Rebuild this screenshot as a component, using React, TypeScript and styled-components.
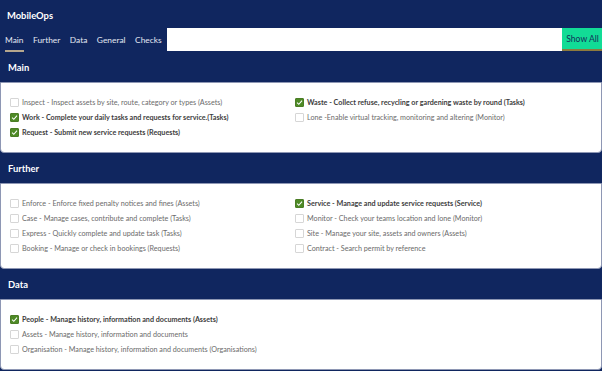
import React from 'react'
import styled, { createGlobalStyle } from 'styled-components'

const Global = createGlobalStyle`
  body {
    margin: 0;
    background: #10265f;
    font-family: Lato, "Liberation Sans", sans-serif;
  }
`

const Page = styled.div`
  width: 602px;
  height: 371px;
  overflow: hidden;
  display: flex;
  flex-direction: column;
`

const Title = styled.div`
  height: 28px;
  display: flex;
  align-items: center;
  padding: 3px 0 0 7px;
  box-sizing: border-box;
  color: #fff;
  font-weight: 700;
  font-size: 9.4px;
`

const TabBar = styled.div`
  display: flex;
  height: 24px;
  align-items: stretch;
`

const Tabs = styled.div`
  display: flex;
  gap: 9.5px;
  padding: 0 5px 0 5px;
`

const Tab = styled.div<{ $active?: boolean }>`
  display: flex;
  align-items: center;
  color: #e4e8f2;
  font-size: 8.4px;
  border-bottom: 2px solid ${(p) => (p.$active ? '#b5a68d' : 'transparent')};
  box-sizing: border-box;
  padding-top: 2px;
`

const Search = styled.input`
  flex: 1;
  border: none;
  background: #fff;
  margin: 0;
  padding: 0;
  height: 23px;
`

const ShowAll = styled.button`
  width: 40px;
  height: 23px;
  border: none;
  padding: 0 0 0 1px;
  background: #12dc96;
  color: #12305a;
  font-family: Lato, "Liberation Sans", sans-serif;
  font-size: 8.6px;
  white-space: nowrap;
  border-bottom: 2px solid #8d7a3e;
  box-sizing: border-box;
`

const Section = styled.section`
  margin-top: 1px;
  display: flex;
  flex-direction: column;
`

const SectionHead = styled.div`
  height: 29px;
  display: flex;
  align-items: center;
  padding-left: 8px;
  color: #fff;
  font-weight: 700;
  font-size: 9.4px;
`

const SectionBody = styled.div`
  background: #fff;
  border: 1px solid #8e97b4;
  border-radius: 0 0 4px 4px;
  padding: 12px 0 12px 9px;
  display: grid;
  grid-template-columns: 285px 1fr;
  align-content: start;
`

const Column = styled.div`
  display: flex;
  flex-direction: column;
`

const Row = styled.label`
  height: 15px;
  display: flex;
  align-items: center;
  gap: 3px;
  font-size: 7.2px;
  white-space: nowrap;
`

const Box = styled.span<{ $checked?: boolean }>`
  width: 9px;
  height: 9px;
  border-radius: 1px;
  box-sizing: border-box;
  border: 1px solid ${(p) => (p.$checked ? '#4b7d25' : '#d6d6d6')};
  background: ${(p) => (p.$checked ? '#4e8a26' : '#fff')};
  display: flex;
  align-items: center;
  justify-content: center;
`

const Label = styled.span<{ $checked?: boolean }>`
  color: ${(p) => (p.$checked ? '#3d3d3d' : '#6b6b6b')};
  font-weight: ${(p) => (p.$checked ? 700 : 400)};
`

type Item = [string, boolean]

const Check = ({ text, on }: { text: string; on: boolean }) => (
  <Row>
    <Box $checked={on}>
      {on && (
        <svg width="7" height="7" viewBox="0 0 10 10">
          <path d="M1.5 5.2 L4 7.6 L8.6 2.4" fill="none" stroke="#fff" strokeWidth="1.5" />
        </svg>
      )}
    </Box>
    <Label $checked={on}>{text}</Label>
  </Row>
)

const Group = ({ title, left, right }: { title: string; left: Item[]; right: Item[] }) => (
  <Section>
    <SectionHead>{title}</SectionHead>
    <SectionBody>
      <Column>
        {left.map(([t, on]) => <Check key={t} text={t} on={on} />)}
      </Column>
      <Column>
        {right.map(([t, on]) => <Check key={t} text={t} on={on} />)}
      </Column>
    </SectionBody>
  </Section>
)

export default function App() {
  return (
    <Page>
      <Global />
      <Title>MobileOps</Title>
      <TabBar>
        <Tabs>
          <Tab $active>Main</Tab>
          <Tab>Further</Tab>
          <Tab>Data</Tab>
          <Tab>General</Tab>
          <Tab>Checks</Tab>
        </Tabs>
        <Search />
        <ShowAll>Show All</ShowAll>
      </TabBar>
      <Group
        title="Main"
        left={[
          ['Inspect - Inspect assets by site, route, category or types (Assets)', false],
          ['Work - Complete your daily tasks and requests for service.(Tasks)', true],
          ['Request - Submit new service requests (Requests)', true],
        ]}
        right={[
          ['Waste - Collect refuse, recycling or gardening waste by round (Tasks)', true],
          ['Lone -Enable virtual tracking, monitoring and altering (Monitor)', false],
        ]}
      />
      <Group
        title="Further"
        left={[
          ['Enforce - Enforce fixed penalty notices and fines (Assets)', false],
          ['Case - Manage cases, contribute and complete (Tasks)', false],
          ['Express - Quickly complete and update task (Tasks)', false],
          ['Booking - Manage or check in bookings (Requests)', false],
        ]}
        right={[
          ['Service - Manage and update service requests (Service)', true],
          ['Monitor - Check your teams location and lone (Monitor)', false],
          ['Site - Manage your site, assets and owners (Assets)', false],
          ['Contract - Search permit by reference', false],
        ]}
      />
      <Group
        title="Data"
        left={[
          ['People - Manage history, information and documents (Assets)', true],
          ['Assets - Manage history, information and documents', false],
          ['Organisation - Manage history, information and documents (Organisations)', false],
        ]}
        right={[]}
      />
    </Page>
  )
}
